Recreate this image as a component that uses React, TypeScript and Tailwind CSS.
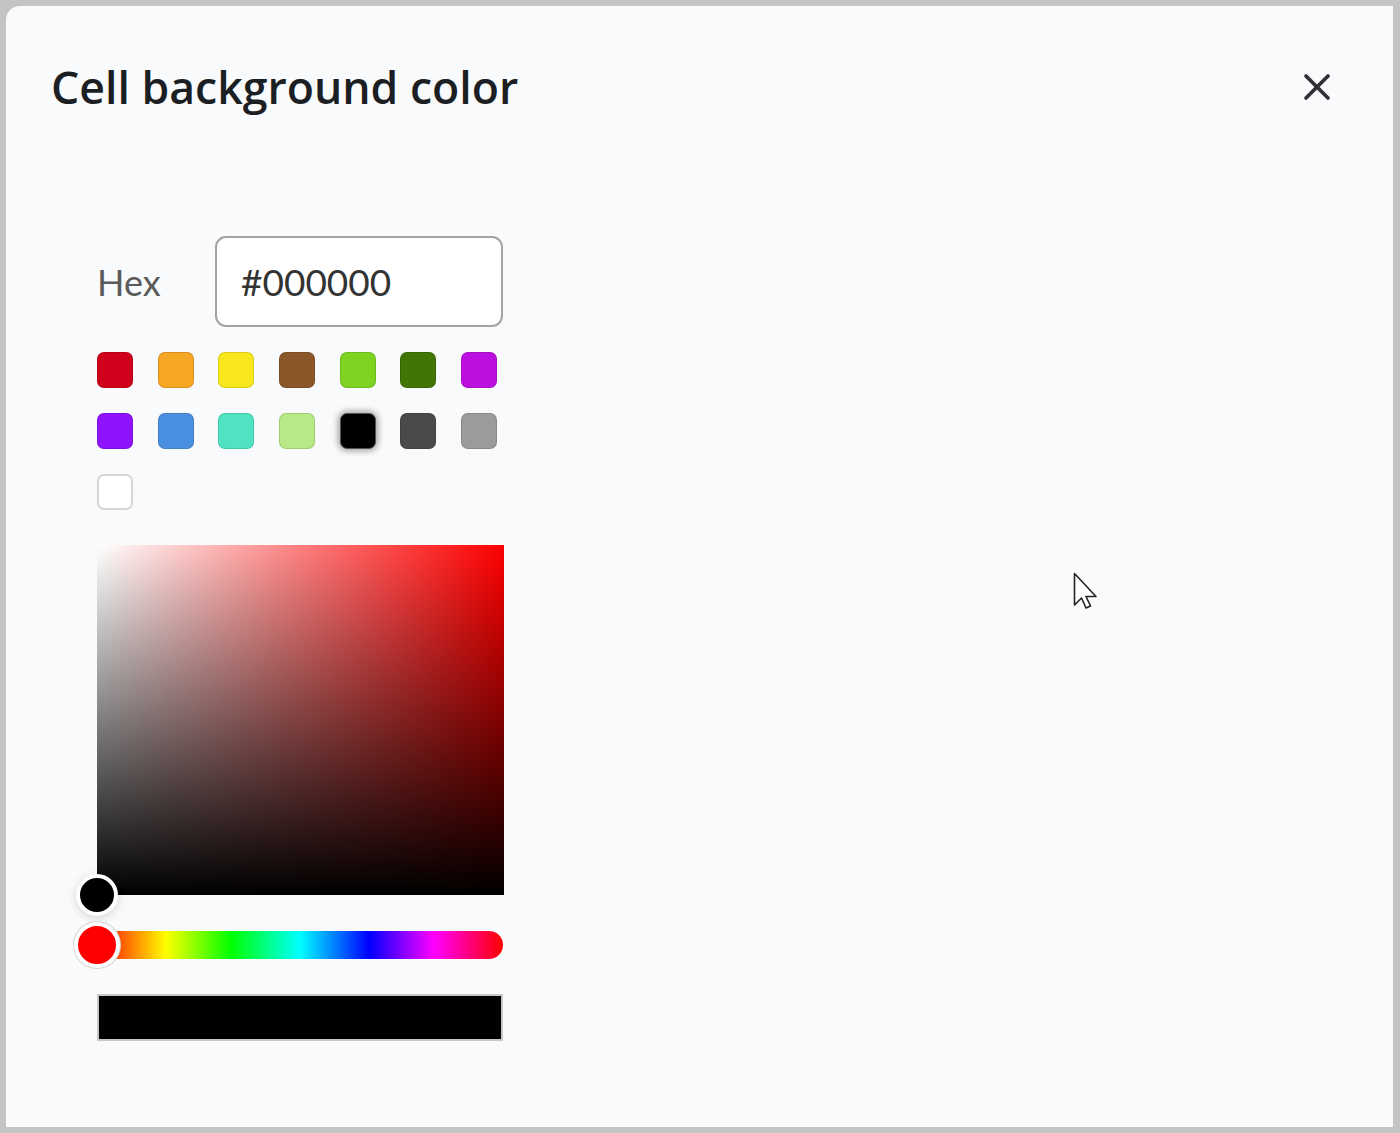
import { X } from "lucide-react";

const swatches = [
  "#d0021b", "#f5a623", "#f8e71c", "#8b572a", "#7ed321", "#417505", "#bd10e0",
  "#9013fe", "#4a90e2", "#50e3c2", "#b8e986", "#000000", "#4a4a4a", "#9b9b9b",
  "#ffffff",
];

function Pointer() {
  return (
    <svg width="26" height="38" viewBox="0 0 26 38" className="ml-[1067px] mt-[-469px]">
      <path
        d="M1.5 1.5 L1.5 33 L8.5 26 L13 36 L17.5 34 L13 24.5 L23 24.5 Z"
        fill="#ffffff"
        stroke="#222222"
        strokeWidth="1.6"
        strokeLinejoin="round"
      />
    </svg>
  );
}

export default function App() {
  return (
    <div className="h-[1133px] w-[1400px] bg-[#c4c4c4] p-[6px] pr-[7px]" style={{ fontFamily: "'Open Sans', sans-serif" }}>
      <div className="flex h-full flex-col rounded-tl-[14px] bg-[#f9fafc]">
        <div className="flex items-center justify-between pl-[45px] pr-[54px] pt-[52px]">
          <h1 className="text-[44.6px] font-semibold leading-[58px] text-[#1b1e22]">Cell background color</h1>
          <X size={44} strokeWidth={2} className="text-[#2e3033]" />
        </div>

        <div className="flex flex-col pl-[91px] pt-[120px]">
          <div className="flex items-center">
            <span className="w-[118px] text-[36px] text-[#5a5a5a]" style={{ fontFamily: "Lato, sans-serif" }}>
              Hex
            </span>
            <div className="flex h-[91px] w-[288px] items-center rounded-[11px] border-2 border-[#a3a3a3] bg-white pl-[24px] text-[37px] text-[#333]" style={{ fontFamily: "Lato, sans-serif" }}>
              #000000
            </div>
          </div>

          <div className="mt-[25px] flex w-[404px] flex-wrap gap-x-[24.7px] gap-y-[25px]">
            {swatches.map((c) => (
              <div
                key={c}
                className={
                  c === "#000000"
                    ? "h-[36px] w-[36px] rounded-[7px] border border-[#555] shadow-[0_0_6px_2px_rgba(0,0,0,0.35)]"
                    : c === "#ffffff"
                    ? "h-[36px] w-[36px] rounded-[7px] border-2 border-[#d6d6d6]"
                    : "h-[36px] w-[36px] rounded-[7px] shadow-[inset_0_0_0_1px_rgba(0,0,0,0.12)]"
                }
                style={{ backgroundColor: c }}
              />
            ))}
          </div>

          <div className="relative mt-[35px] h-[350px] w-[407px] bg-[#ff0000]">
            <div className="absolute inset-0 bg-gradient-to-r from-white to-transparent" />
            <div className="absolute inset-0 bg-gradient-to-b from-transparent to-black" />
            <div className="absolute bottom-[-21px] left-[-21px] h-[42px] w-[42px] rounded-full border-[4px] border-white bg-black shadow-[0_2px_10px_rgba(0,0,0,0.15)]" />
          </div>

          <div className="relative mt-[36px] h-[28px] w-[406px] rounded-full bg-[linear-gradient(to_right,#f00_0%,#ff0_17%,#0f0_33%,#0ff_50%,#00f_67%,#f0f_83%,#f00_100%)]">
            <div className="absolute left-[-23px] top-[-9px] h-[46px] w-[46px] rounded-full border-[4px] border-white bg-[#ff0000] shadow-[0_0_0_1px_#d4d4d4]" />
          </div>

          <div className="mt-[35px] h-[47px] w-[406px] border-2 border-[#c8c8c8] bg-black" />
        </div>

        <Pointer />
      </div>
    </div>
  );
}
